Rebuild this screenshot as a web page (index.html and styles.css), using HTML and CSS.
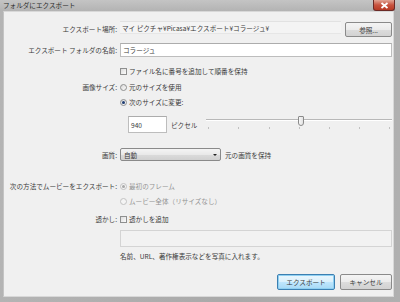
FILE: index.html
```html
<!DOCTYPE html>
<html lang="ja">
<head>
  <meta charset="UTF-8">
  <title>フォルダにエクスポート</title>
  <link rel="stylesheet" href="styles.css">
</head>
<body>

<div class="window">
  <div class="titlebar">
    <span class="title">フォルダにエクスポート</span>
    <span class="close">
      <svg width="9" height="7" viewBox="0 0 9 7"><path d="M1.5 1 L7.5 6 M7.5 1 L1.5 6" stroke="#fff" stroke-width="1.8"/></svg>
    </span>
  </div>

  <div class="client">
    <div class="row r1">
      <span class="label">エクスポート場所:</span>
      <div class="line">
        <span class="path">マイ ピクチャ¥Picasa¥エクスポート¥コラージュ¥</span>
        <span class="btn browse">参照...</span>
      </div>
    </div>

    <div class="row r2">
      <span class="label">エクスポート フォルダの名前:</span>
      <span class="textbox">コラージュ</span>
    </div>

    <div class="row r3">
      <span></span>
      <span class="opt"><i class="check"></i>ファイル名に番号を追加して順番を保持</span>
    </div>

    <div class="row r4">
      <span class="label">画像サイズ:</span>
      <span class="opt"><i class="radio"></i>元のサイズを使用</span>
    </div>

    <div class="row r5">
      <span></span>
      <span class="opt"><i class="radio on"></i>次のサイズに変更:</span>
    </div>

    <div class="row r6">
      <span></span>
      <div class="line">
        <span class="textbox size">940</span>
        <span class="unit">ピクセル</span>
        <div class="slider">
          <div class="track"></div>
          <div class="thumb"></div>
          <div class="ticks"><i></i><i></i><i></i><i></i><i></i><i></i><i></i></div>
        </div>
      </div>
    </div>

    <div class="row r7">
      <span class="label">画質:</span>
      <div class="line">
        <span class="select">自動<i class="arrow"></i></span>
        <span class="unit">元の画質を保持</span>
      </div>
    </div>

    <div class="row r8">
      <span class="label">次の方法でムービーをエクスポート:</span>
      <span class="opt off"><i class="radio dis on"></i>最初のフレーム</span>
    </div>

    <div class="row r9">
      <span></span>
      <span class="opt off"><i class="radio dis"></i>ムービー全体（リサイズなし）</span>
    </div>

    <div class="row r10">
      <span class="label">透かし:</span>
      <span class="opt"><i class="check"></i>透かしを追加</span>
    </div>

    <div class="row r11">
      <span></span>
      <span class="textbox disabled"></span>
    </div>

    <div class="row r12">
      <span></span>
      <span class="opt">名前、URL、著作権表示などを写真に入れます。</span>
    </div>

    <div class="buttons">
      <span class="btn default">エクスポート</span>
      <span class="btn">キャンセル</span>
    </div>
  </div>
</div>

</body>
</html>
```

FILE: styles.css
```css
* { margin: 0; padding: 0; box-sizing: border-box; }
body {
  font-family: "Noto Sans CJK JP", "Liberation Sans", sans-serif;
  font-size: 6.6px;
  color: #3a3a3a;
  background: #9c9c9c;
}
.window {
  width: 400px;
  height: 302px;
  background: linear-gradient(90deg, #b4b4b4, #a9a9a9 60%, #b0b0b0);
  display: flex;
  flex-direction: column;
}
.titlebar {
  height: 13px;
  display: flex;
  align-items: center;
  justify-content: space-between;
  padding-left: 3px;
  padding-right: 5px;
  background: linear-gradient(180deg, #c4c4c4, #b3b3b3);
}
.title {
  color: #2a2a2a;
  font-size: 6.6px;
  margin-top: -2px;
}
.close {
  width: 22px;
  height: 11px;
  align-self: flex-start;
  display: flex;
  align-items: center;
  justify-content: center;
  border: 1px solid #6b2a26;
  border-top: none;
  border-radius: 0 0 3px 3px;
  background: linear-gradient(180deg, #e1a595, #c8533f 50%, #b73a25);
}
.client {
  flex: 1;
  margin: 0 6px 5px 3px;
  padding: 9px 1px 6px 0;
  background: #f0f0f0;
  border: 1px solid #d8d8d8;
  border-left-color: #c4c4c4;
  display: flex;
  flex-direction: column;
}
.row {
  display: grid;
  grid-template-columns: 113px 1fr;
  column-gap: 3px;
  align-items: center;
  height: 12px;
}
.label { text-align: right; white-space: nowrap; }
.line { display: flex; align-items: center; height: 100%; }

.r1 { height: 16px; }
.r2 { height: 14px; margin-top: 6px; }
.r3 { margin-top: 8px; }
.r4 { margin-top: 4px; }
.r5 { margin-top: 3px; }
.r6 { height: 17px; margin-top: 8px; }
.r7 { height: 13px; margin-top: 15px; }
.r8 { margin-top: 19px; }
.r9 { margin-top: 3px; }
.r10 { margin-top: 6px; }
.r11 { height: 17px; margin-top: 5px; }
.r12 { margin-top: 3px; }

.path {
  flex: 1;
  height: 13px;
  align-self: flex-start;
  padding-left: 2px;
  display: flex;
  align-items: center;
  background: #f4f4f4;
  border-top: 1px solid #e2e2e2;
  border-bottom: 1px solid #e6e6e6;
  white-space: nowrap;
}
.btn {
  display: flex;
  align-items: center;
  justify-content: center;
  height: 16px;
  border: 1px solid #8a8a8a;
  border-radius: 2px;
  background: linear-gradient(180deg, #f4f4f4, #ebebeb 50%, #dcdcdc 52%, #d2d2d2);
  color: #3a3a3a;
}
.browse { width: 47px; margin-left: 4px; height: 15px; align-self: flex-end; }

.textbox {
  display: flex;
  align-items: center;
  height: 100%;
  padding-left: 2px;
  background: #fff;
  border: 1px solid #bdbdbd;
  border-top-color: #acacac;
}
.textbox.size { width: 39px; margin-left: 8px; }
.textbox.disabled { background: #f2f2f2; border-color: #d4d4d4; }

.opt { display: flex; align-items: center; white-space: nowrap; }
.opt.off { color: #939393; }
.check {
  width: 7px;
  height: 7px;
  margin-right: 2px;
  border: 1px solid #8e8f8f;
  background: linear-gradient(135deg, #dcdcdc, #fcfcfc);
}
.radio {
  width: 7px;
  height: 7px;
  margin-right: 2px;
  border: 1px solid #8e8f8f;
  border-radius: 50%;
  background: linear-gradient(135deg, #dadada, #fafafa);
  display: flex;
  align-items: center;
  justify-content: center;
}
.radio.on::after {
  content: "";
  width: 3px;
  height: 3px;
  border-radius: 50%;
  background: #1f3d73;
}
.radio.dis { border-color: #c2c2c2; background: #f4f4f4; }
.radio.dis.on::after { background: #a8a8a8; }

.unit { margin-left: 4px; white-space: nowrap; }
.slider {
  position: relative;
  flex: 1;
  height: 100%;
  margin-left: 9px;
}
.track {
  margin-top: 3px;
  height: 2px;
  border-top: 1px solid #b8b8b8;
  border-bottom: 1px solid #fff;
}
.thumb {
  position: absolute;
  left: 92px;
  top: 0;
  width: 6px;
  height: 10px;
  border: 1px solid #8a8a8a;
  border-radius: 1px 1px 3px 3px;
  background: linear-gradient(90deg, #f8f8f8, #e2e2e2);
}
.ticks {
  display: flex;
  justify-content: space-between;
  padding: 0 2px;
  margin-top: 6px;
}
.ticks i { width: 1px; height: 2px; background: #c0c0c0; }

.select {
  position: relative;
  width: 101px;
  height: 100%;
  display: flex;
  align-items: center;
  padding-left: 3px;
  border: 1px solid #8a8a8a;
  border-radius: 2px;
  background: linear-gradient(180deg, #f4f4f4, #e9e9e9 50%, #dbdbdb 52%, #d0d0d0);
}
.arrow {
  position: absolute;
  right: 3px;
  top: 5px;
  border-left: 2px solid transparent;
  border-right: 2px solid transparent;
  border-top: 2px solid #222;
}

.buttons {
  display: flex;
  justify-content: flex-end;
  gap: 5px;
  margin-top: 12px;
}
.buttons .btn { width: 52px; }
.buttons .btn.default {
  width: 58px;
  border-color: #3c7fb1;
  background: linear-gradient(180deg, #eaf6fd, #d9f0fc 50%, #bee6fd 52%, #a7d9f5);
  box-shadow: inset 0 0 0 1px #8fd0f2;
}
```
